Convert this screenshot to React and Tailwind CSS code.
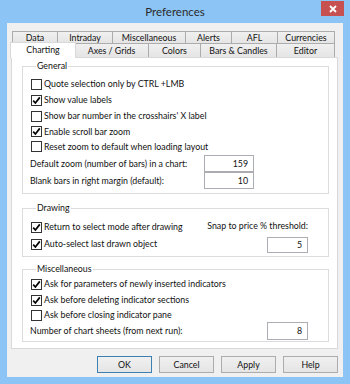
import React from 'react';

const Check = ({ checked, label }) => (
  <div className="flex items-center whitespace-nowrap">
    <span className="w-[11px] h-[11px] border border-[#333333] bg-white flex items-center justify-center mr-[2px] shrink-0">
      {checked && (
        <svg width="9" height="9" viewBox="0 0 9 9">
          <path d="M1.2 4.6 L3.4 7 L7.8 1.4" fill="none" stroke="#000" strokeWidth="1.7" />
        </svg>
      )}
    </span>
    <span>{label}</span>
  </div>
);

const Field = ({ value, className }) => (
  <div className={`border border-[#abadb3] bg-white flex items-center justify-end pr-[5px] ${className}`}>
    {value}
  </div>
);

const backTabs = [
  ['Data', 'w-[45px]'],
  ['Intraday', 'w-[55px]'],
  ['Miscellaneous', 'w-[73px]'],
  ['Alerts', 'w-[46px]'],
  ['AFL', 'w-[46px]'],
  ['Currencies', 'w-[58px] border-r'],
];

const frontTabs = [
  ['Axes / Grids', 'w-[74px]'],
  ['Colors', 'w-[52px]'],
  ['Bars & Candles', 'w-[76px]'],
  ['Editor', 'w-[59px] border-r'],
];

const tabStyle =
  'h-full flex items-center justify-center whitespace-nowrap border-t border-l border-[#acacac] bg-gradient-to-b from-[#f0f0f0] to-[#e5e5e5]';

const Legend = ({ children }) => (
  <legend className="ml-[5px] px-[1px] leading-[14px]">{children}</legend>
);

export default function App() {
  return (
    <div className="w-[350px] h-[384px] bg-[#8cc4f5] flex flex-col font-['Lato',sans-serif] text-[8.8px] text-[#111]">
      <div className="h-[23px] relative flex items-center justify-center">
        <span className="text-[11.5px] text-[#2b2b2b]">Preferences</span>
        <div className="absolute right-[6px] top-[1px] w-[23px] h-[15px] bg-[#c75050] flex items-center justify-center">
          <svg width="8" height="8" viewBox="0 0 8 8">
            <path d="M1 1 L7 7 M7 1 L1 7" stroke="#fff" strokeWidth="1.8" />
          </svg>
        </div>
      </div>

      <div className="mx-[7px] h-[354px] bg-[#f0f0f0] flex flex-col pt-[8px]">
        <div className="ml-[5px] h-[12px] flex">
          {backTabs.map(([t, w]) => (
            <div key={t} className={`${tabStyle} ${w}`}>
              {t}
            </div>
          ))}
        </div>
        <div className="ml-[5px] h-[14px] flex items-end relative z-10">
          <div className="w-[66px] h-[16px] -ml-[2px] -mr-[2px] mb-[-1px] bg-white border border-b-0 border-[#d9d9d9] flex items-center justify-center relative z-10 pb-[2px]">
            Charting
          </div>
          {frontTabs.map(([t, w]) => (
            <div key={t} className={`${tabStyle} ${w}`}>
              {t}
            </div>
          ))}
        </div>

        <div className="ml-[4px] w-[327px] h-[292px] bg-white border border-[#d9d9d9] pl-[10px] pr-[8px] pt-[1px]">
          <fieldset className="border border-[#dcdcdc] pl-[8px] pb-[4px]">
            <Legend>General</Legend>
            <div className="pt-[3px] flex flex-col">
              <div className="h-[16px] flex items-center"><Check label="Quote selection only by CTRL +LMB" /></div>
              <div className="h-[16px] flex items-center"><Check checked label="Show value labels" /></div>
              <div className="h-[16px] flex items-center"><Check label="Show bar number in the crosshairs' X label" /></div>
              <div className="h-[15px] flex items-center"><Check checked label="Enable scroll bar zoom" /></div>
              <div className="h-[15px] flex items-center"><Check label="Reset zoom to default when loading layout" /></div>
              <div className="mt-[1px] h-[17px] flex items-center">
                <span className="w-[174px] -ml-[1px] whitespace-nowrap">Default zoom (number of bars) in a chart:</span>
                <Field value="159" className="w-[50px] h-[17px]" />
              </div>
              <div className="h-[17px] flex items-center">
                <span className="w-[174px] -ml-[1px] whitespace-nowrap">Blank bars in right margin (default):</span>
                <Field value="10" className="w-[50px] h-[17px]" />
              </div>
            </div>
          </fieldset>

          <fieldset className="mt-[7px] border border-[#dcdcdc] pl-[8px] pr-[20px] pb-[3px]">
            <Legend>Drawing</Legend>
            <div className="pt-[4px] flex">
              <div className="flex-1 flex flex-col gap-[1px]">
                <div className="h-[16px] flex items-center"><Check checked label="Return to select mode after drawing" /></div>
                <div className="h-[16px] flex items-center"><Check checked label="Auto-select last drawn object" /></div>
              </div>
              <div className="flex flex-col items-end">
                <div className="h-[14px] flex items-center whitespace-nowrap">Snap to price % threshold:</div>
                <Field value="5" className="mt-[4px] w-[41px] h-[16px]" />
              </div>
            </div>
          </fieldset>

          <fieldset className="mt-[5px] border border-[#dcdcdc] pl-[8px] pr-[20px] pb-[1px]">
            <Legend>Miscellaneous</Legend>
            <div className="flex flex-col">
              <div className="h-[16px] flex items-center"><Check checked label="Ask for parameters of newly inserted indicators" /></div>
              <div className="h-[16px] flex items-center"><Check checked label="Ask before deleting indicator sections" /></div>
              <div className="h-[14px] flex items-center"><Check label="Ask before closing indicator pane" /></div>
              <div className="h-[18px] flex items-center justify-between">
                <span className="-ml-[1px] whitespace-nowrap">Number of chart sheets (from next run):</span>
                <Field value="8" className="w-[41px] h-[18px]" />
              </div>
            </div>
          </fieldset>
        </div>

        <div className="mt-[7px] h-[17px] flex justify-end gap-[7px] pr-[5px]">
          <button className="w-[55px] h-full border border-[#3c7fb1] bg-gradient-to-b from-[#f0f0f0] to-[#e5e5e5] flex items-center justify-center">OK</button>
          <button className="w-[55px] h-full border border-[#acacac] bg-gradient-to-b from-[#f0f0f0] to-[#e5e5e5] flex items-center justify-center">Cancel</button>
          <button className="w-[55px] h-full border border-[#acacac] bg-gradient-to-b from-[#f0f0f0] to-[#e5e5e5] flex items-center justify-center">Apply</button>
          <button className="w-[55px] h-full border border-[#acacac] bg-gradient-to-b from-[#f0f0f0] to-[#e5e5e5] flex items-center justify-center">Help</button>
        </div>
      </div>
    </div>
  );
}
